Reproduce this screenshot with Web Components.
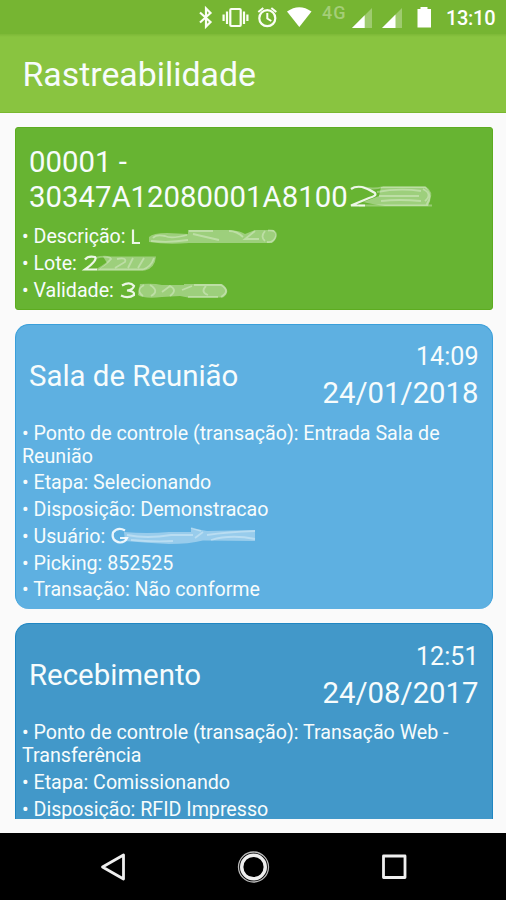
<!DOCTYPE html>
<html lang="pt-BR">
<head>
<meta charset="utf-8">
<title>Rastreabilidade</title>
<style>
html,body{margin:0;height:100%;overflow:hidden;background:#fafafa}
body{font-family:Roboto,"Noto Sans",sans-serif;color:#f7fcfc}
</style>
</head>
<body>
<trace-app></trace-app>
<script>
const define = (name, html) => customElements.define(name, class extends HTMLElement {
  constructor() {
    super();
    const t = document.createElement('template');
    t.innerHTML = html;
    this.attachShadow({mode: 'open'}).append(t.content.cloneNode(true));
  }
});

define('status-bar', `<style>
:host{display:block;height:34px;background:#76b532}
svg{display:block}
text{font:500 20px Roboto,sans-serif}
</style>
<svg width="506" height="34" viewBox="0 0 506 34" fill="none" stroke="#fbfef5">
<path d="M200 12.500l10.500 9.500-4.500 4.500V8.500l4.500 4.500-10.500 9.500" stroke-width="2.200"/>
<rect x="230.300" y="9" width="10.400" height="17" rx="1" stroke-width="2.200"/>
<path d="M227 11.500v12.500M244 11.500v12.500M223.600 14.500v6.500M247.400 14.500v6.500" stroke-width="2.200"/>
<circle cx="267.300" cy="18.200" r="8" stroke-width="2.200"/>
<path d="M267.300 13v5.500l4 2.500M258.300 12l5-4M276.300 12l-5-4" stroke-width="2"/>
<path d="M287 11.500Q299.300 3 311.500 11.500L299.300 27z" fill="#fff" stroke="none"/>
<text x="322" y="19.300" textLength="23.500" style="font-size:18px" fill="#fff" fill-opacity=".34" stroke="none">4G</text>
<path d="M352 28L372 8V28zM382 28L402 8V28z" fill="#fff" fill-opacity=".3" stroke="none"/>
<path d="M352 28L364.700 15.300V28zM382 28L395.500 14.500V28z" fill="#fff" stroke="none"/>
<path d="M420.500 7h7v2h3.500v18.500H417.500V9h3z" fill="#fff" stroke="none"/>
<text x="446" y="25" textLength="49.500" fill="#fff" stroke="none">13:10</text>
</svg>`);

define('app-bar', `<style>
:host{display:flex;align-items:center;box-sizing:border-box;height:79px;padding:4px 24px 0 22.500px;background:linear-gradient(#7db837,#89c440 3px);border-bottom:1px solid #79b82e;font-size:33.850px;line-height:40px}
</style><slot></slot>`);

define('event-card', `<style>
:host{display:block;flex:none;box-sizing:border-box;border-radius:14px;background:var(--fill);border:solid var(--edge);border-width:1px 1px 0;padding:14.500px 13px 0 6.500px}
header{display:flex;justify-content:space-between;align-items:center;padding-left:7px;height:73px;box-sizing:border-box}
.place{font-size:29.400px;line-height:36px}
.when{text-align:right;display:flex;flex-direction:column}
.time{font-size:25.100px;line-height:35px}
.date{font-size:29.300px;line-height:38px}
.rows{padding-top:9.500px;display:flex;flex-direction:column;gap:3.750px}
</style>
<header><div class="place"><slot name="place"></slot></div>
<div class="when"><div class="time"><slot name="time"></slot></div><div class="date"><slot name="date"></slot></div></div></header>
<div class="rows"><slot></slot></div>`);

define('product-card', `<style>
:host{display:block;flex:none;box-sizing:border-box;height:182.500px;border-radius:3px;background:#67b432;border:1px solid #5dac20;padding:17px 13px 0 6.500px}
.code{font-size:29.350px;line-height:34.500px;padding-left:7px;white-space:nowrap}
.rows{padding-top:11.400px;display:flex;flex-direction:column;gap:3.750px}
</style><div class="code"><slot name="code"></slot></div><div class="rows"><slot></slot></div>`);

define('detail-row', `<style>:host{display:block;font-size:19.650px;line-height:23px}</style>• <slot></slot>`);

/* Smudged values: [width, height, clear strokes, faint strokes, translucent band] */
const smudges = {
  code: [84, 25,
    'M2 5Q6 2 13 3Q20 5 26 9Q28 12 20 14L2 21.500H16',
    'M14 3Q24 6 34 3H76Q84 8 80 16L77 22M10 21.500H83M28 8Q50 4 72 7M30 12H70M32 17Q50 15 72 17M74 5Q84 10 76 17',
    'M32 3H77Q85 12 79 22H36Q22 20 14 18L30 12z'],
  desc: [146, 17,
    'M2 1.500V15H9',
    'M22 10Q25 6 34 8Q40 11 56 7M20 13Q38 15 57 12M58 3H82M62 6L88 12M98 3Q106 3 112 9M124 3L114 11H128M134 3Q129 9 134 13M137 2.500Q146 2 145 8Q143 15 136 14',
    'M18 9Q22 5 36 5L57 6V2H88L100 2Q110 3 114 6L124 2H143Q148 9 141 15H100L58 15Q36 17 18 14z'],
  lote: [73, 17,
    'M2 4.500Q5 .500 12 2Q15 5 2 14.500H14',
    'M12 3Q26 0 28 4Q24 9 14 14.500H60Q68 12 71 3M34 4Q44 2 42 7L32 13M50 3L45 13M61 3L55 13',
    'M20 1.500H73Q72 13 62 15.500H14L24 8z'],
  validade: [108, 17,
    'M2 3.500Q10-1 14 4Q13 8 7 8.500Q15 9 14 13Q8 17 1 13.500',
    'M24 3Q15 8 23 14M30 3Q40 9 31 14M42 10L50 4Q58 8 50 14M62 8L72 4M68 15H98M74 3H101Q111 9 101 15M86 4Q80 10 88 13',
    'M20 2Q34 1 42 3L64 3V2H102Q112 9 103 15.500H68L60 14L42 15Q24 17 18 13z'],
  user: [144, 18,
    'M14 3.500Q7-.500 2 5.500Q0 14 9 15.500Q14 15.500 16 11H9',
    'M16 8Q36 12 60 8L82 8M20 13Q42 15 62 14M80 1L90 4M92 5L84 11M96 8Q116 5 144 4M100 13Q120 7 144 12',
    'M13 5Q36 7 58 5L80 5V1L96 4L144 3V14L92 13.500Q78 17 58 17Q36 16 14 14z']
};
customElements.define('smudged-value', class extends HTMLElement {
  connectedCallback() {
    const [w, h, clear, faint, band] = smudges[this.getAttribute('kind')];
    this.attachShadow({mode: 'open'}).innerHTML = `<style>:host{display:inline-block;height:0;vertical-align:baseline}svg{display:block;overflow:visible;margin-top:-${h - 2}px;margin-left:1px;filter:blur(.6px)}</style>
<svg width="${w}" height="${h}" fill="none" stroke="#fff"><path d="${band}" fill="#fff" fill-opacity=".36" stroke="none"/><path d="${faint}" stroke-opacity=".32" stroke-width="1.800"/><path d="${clear}" stroke-opacity=".88" stroke-width="2.200"/></svg>`;
  }
});

define('nav-bar', `<style>:host{display:block;height:67px;background:#000}svg{display:block}</style>
<svg width="506" height="67" viewBox="0 833 506 67" fill="none" stroke="#efefef" stroke-linejoin="round">
<path d="M102.500 867L123.500 855V879z" stroke-width="2.800"/>
<circle cx="253.500" cy="867" r="15" stroke="#bbb" stroke-width="1.300"/><circle cx="253.500" cy="867" r="11.800" stroke-width="3.400"/>
<rect x="383.500" y="856" width="21.500" height="21.500" stroke-width="2.800"/>
</svg>`);

define('trace-app', `<style>
:host{display:flex;flex-direction:column;width:506px;height:900px;background:#fafafa}
main{flex:1;min-height:0;display:flex;flex-direction:column;padding:14px 13.500px 14px 14.500px;box-sizing:border-box}
.list{flex:1;min-height:0;overflow:hidden;display:flex;flex-direction:column;gap:14px}
.a{--fill:#5eb0e1;--edge:#3a9fda;height:285.500px}
.b{--fill:#4298c9;--edge:#1f86c2;height:300px}
</style>
<status-bar></status-bar>
<app-bar>Rastreabilidade</app-bar>
<main><div class="list">
<product-card><span slot="code">00001 -<br>30347A12080001A8100<smudged-value kind="code"></smudged-value></span>
<detail-row>Descrição: <smudged-value kind="desc"></smudged-value></detail-row>
<detail-row>Lote: <smudged-value kind="lote"></smudged-value></detail-row>
<detail-row>Validade: <smudged-value kind="validade"></smudged-value></detail-row></product-card>
<event-card class="a"><span slot="place">Sala de Reunião</span><span slot="time">14:09</span><span slot="date">24/01/2018</span>
<detail-row>Ponto de controle (transação): Entrada Sala de Reunião</detail-row>
<detail-row>Etapa: Selecionando</detail-row>
<detail-row>Disposição: Demonstracao</detail-row>
<detail-row>Usuário: <smudged-value kind="user"></smudged-value></detail-row>
<detail-row>Picking: 852525</detail-row>
<detail-row>Transação: Não conforme</detail-row></event-card>
<event-card class="b"><span slot="place">Recebimento</span><span slot="time">12:51</span><span slot="date">24/08/2017</span>
<detail-row>Ponto de controle (transação): Transação Web - Transferência</detail-row>
<detail-row>Etapa: Comissionando</detail-row>
<detail-row>Disposição: RFID Impresso</detail-row></event-card>
</div></main>
<nav-bar></nav-bar>`);
</script>
</body>
</html>
